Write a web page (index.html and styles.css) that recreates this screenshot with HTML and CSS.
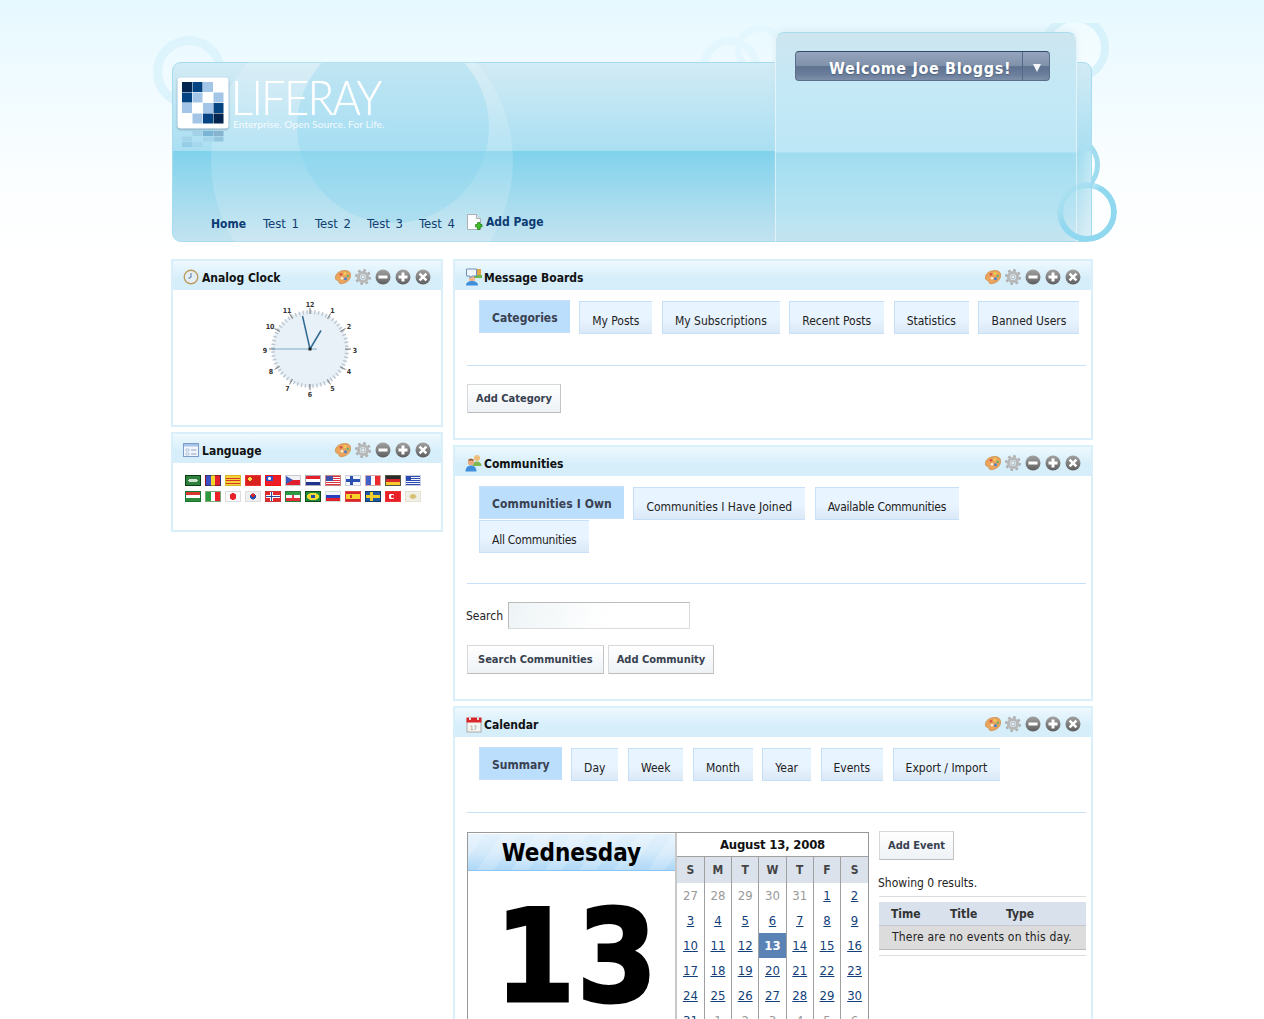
FILE: index.html
```html
<!DOCTYPE html>
<html lang="en">
<head>
<meta charset="utf-8">
<title>Liferay</title>
<link rel="stylesheet" href="styles.css">
</head>
<body>
<svg class="sprites" width="0" height="0" aria-hidden="true">
  <defs>
    <linearGradient id="g-btn" x1="0" y1="0" x2="0" y2="1"><stop offset="0" stop-color="#a2a2a2"/><stop offset="1" stop-color="#5e5e5e"/></linearGradient>
    <symbol id="i-palette" viewBox="0 0 16 16"><path d="M.3 9C.3 4.500 4.500 1.500 10 1.500c3.700 0 5.700 2 5.700 4.700 0 4.800-5 8.500-9.700 8.500-1.500 0-2-1-2.300-2.300C3.400 11 .3 11.500.3 9z" fill="#eba45c" stroke="#c98a48" stroke-width=".7"/><circle cx="6" cy="5.300" r="1.400" fill="#d8554a"/><circle cx="10" cy="4.600" r="1.400" fill="#ecd25a"/><circle cx="12.800" cy="7" r="1.300" fill="#6ab46a"/><circle cx="10.500" cy="9.800" r="1.500" fill="#4a7fd0"/><circle cx="7" cy="9.300" r="1.300" fill="#f6efe0"/></symbol>
    <symbol id="i-gear" viewBox="0 0 16 16"><circle cx="8" cy="8" r="6.800" fill="none" stroke="#aeaeae" stroke-width="2.400" stroke-dasharray="2.670 2.670"/><circle cx="8" cy="8" r="4.600" fill="none" stroke="#b8b8b8" stroke-width="3"/><circle cx="8" cy="8" r="2" fill="#e8eef0" stroke="#929292" stroke-width=".6"/></symbol>
    <symbol id="i-min" viewBox="0 0 16 16"><circle cx="8" cy="8" r="7.500" fill="url(#g-btn)"/><rect x="3.500" y="6.500" width="9" height="3" fill="#fff"/></symbol>
    <symbol id="i-max" viewBox="0 0 16 16"><circle cx="8" cy="8" r="7.500" fill="url(#g-btn)"/><path d="M3.500 6.500h3v-3h3v3h3v3h-3v3h-3v-3h-3z" fill="#fff"/></symbol>
    <symbol id="i-close" viewBox="0 0 16 16"><circle cx="8" cy="8" r="7.500" fill="url(#g-btn)"/><path d="M5.500 3.800 8 6.200l2.500-2.400 1.800 1.800L9.800 8l2.500 2.400-1.800 1.800L8 9.800l-2.500 2.400-1.800-1.800L6.200 8 3.700 5.600z" fill="#fff"/></symbol>
  </defs>
</svg>

<div class="deco" aria-hidden="true">
  <span class="ring ring-a"></span>
  <span class="ring ring-b"></span>
  <span class="ring ring-c"></span>
  <span class="ring ring-d"></span>
  <span class="ring ring-e"></span>
  <span class="ring ring-f"></span>
</div>

<div class="page">
  <header class="masthead">
    <span class="band"></span>
    <span class="disc disc-outer"></span>
    <span class="disc disc-inner"></span>
    <div class="logo">
      <svg class="logo-mark" width="52" height="52" viewBox="0 0 52 52">
        <rect x=".5" y=".5" width="51" height="51" rx="3" fill="#fff"/>
        <rect x="5" y="5" width="10" height="10" fill="#03254f"/><rect x="15.500" y="5" width="10" height="10" fill="#044482"/><rect x="26" y="5" width="10" height="10" fill="#a3c5e8"/>
        <rect x="5" y="15.500" width="10" height="10" fill="#044482"/><rect x="15.500" y="15.500" width="10" height="10" fill="#a3c5e8"/><rect x="36.500" y="15.500" width="10" height="10" fill="#a3c5e8"/>
        <rect x="5" y="26" width="10" height="10" fill="#a3c5e8"/><rect x="26" y="26" width="10" height="10" fill="#a3c5e8"/><rect x="36.500" y="26" width="10" height="10" fill="#044482"/>
        <rect x="15.500" y="36.500" width="10" height="10" fill="#a3c5e8"/><rect x="26" y="36.500" width="10" height="10" fill="#044482"/><rect x="36.500" y="36.500" width="10" height="10" fill="#03254f"/>
      </svg>
      <svg class="logo-echo" width="52" height="22" viewBox="0 0 52 22" aria-hidden="true">
        <rect x="15.500" y="2" width="10" height="5" fill="#8db8d8" opacity=".4"/><rect x="26" y="2" width="10" height="5" fill="#3a7fb0" opacity=".45"/><rect x="36.500" y="2" width="10" height="5" fill="#356a94" opacity=".4"/>
        <rect x="5" y="7.500" width="10" height="5" fill="#8db8d8" opacity=".3"/><rect x="26" y="7.500" width="10" height="5" fill="#8db8d8" opacity=".3"/><rect x="36.500" y="7.500" width="10" height="5" fill="#3a7fb0" opacity=".3"/>
        <rect x="5" y="13" width="10" height="5" fill="#3a7fb0" opacity=".18"/><rect x="15.500" y="13" width="10" height="5" fill="#8db8d8" opacity=".2"/>
      </svg>
      <div class="logo-text">
        <div class="logo-name">LIFERAY</div>
        <div class="logo-tag">Enterprise. Open Source. For Life.</div>
      </div>
    </div>
    <nav class="nav">
      <a class="nav-item nav-current">Home</a>
      <a class="nav-item">Test 1</a>
      <a class="nav-item">Test 2</a>
      <a class="nav-item">Test 3</a>
      <a class="nav-item">Test 4</a>
      <a class="nav-add">
        <svg width="16" height="17" viewBox="0 0 16 17"><path d="M.5.500h9l4 4v11H.5z" fill="#fbfcfd" stroke="#aab2b8"/><path d="M9.500.500v4h4" fill="#dfe5e8" stroke="#aab2b8"/><path d="M9.500 9.500h2v-2h2.500v2h2V12h-2v2.500h-2.500V12h-2z" transform="translate(-1 1)" fill="#43c02c" stroke="#1c7c10" stroke-width=".7"/></svg>
        <span>Add Page</span>
      </a>
    </nav>
    <div class="dock">
      <div class="dock-button">
        <span class="dock-label">Welcome Joe Bloggs!</span>
        <span class="dock-arrow"></span>
      </div>
    </div>
  </header>

  <div class="columns">
    <div class="col col-left">
      <section class="portlet">
        <div class="p-title">
          <svg class="p-icon" width="16" height="16" viewBox="0 0 16 16"><circle cx="8" cy="8" r="6.800" fill="#e6eef5" stroke="#bd9f64" stroke-width="1.400"/><path d="M8 4v4l-2.500 1.500" fill="none" stroke="#5c7fa8" stroke-width="1.100"/></svg>
          <h2 class="p-name">Analog Clock</h2>
          <div class="p-tools"><svg><use href="#i-palette"/></svg><svg><use href="#i-gear"/></svg><svg><use href="#i-min"/></svg><svg><use href="#i-max"/></svg><svg><use href="#i-close"/></svg></div>
        </div>
        <div class="clock-body">
          <svg class="clock" width="110" height="110" viewBox="-55 -55 110 110">
            <circle r="38" fill="#e9f1f8"/>
            <circle r="37" fill="none" stroke="#bcc4cc" stroke-width="4" stroke-dasharray="1.300 2.575"/>
            <g stroke="#777" stroke-width="1">
              <line x1="0" y1="-35" x2="0" y2="-41"/><line x1="0" y1="35" x2="0" y2="41"/><line x1="-35" y1="0" x2="-41" y2="0"/><line x1="35" y1="0" x2="41" y2="0"/>
              <line x1="17.500" y1="-30.300" x2="20.500" y2="-35.500"/><line x1="30.300" y1="-17.500" x2="35.500" y2="-20.500"/><line x1="30.300" y1="17.500" x2="35.500" y2="20.500"/><line x1="17.500" y1="30.300" x2="20.500" y2="35.500"/>
              <line x1="-17.500" y1="30.300" x2="-20.500" y2="35.500"/><line x1="-30.300" y1="17.500" x2="-35.500" y2="20.500"/><line x1="-30.300" y1="-17.500" x2="-35.500" y2="-20.500"/><line x1="-17.500" y1="-30.300" x2="-20.500" y2="-35.500"/>
            </g>
            <g class="clock-num" text-anchor="middle">
              <text x="0" y="-42.500">12</text><text x="22.500" y="-36">1</text><text x="39" y="-20">2</text><text x="45" y="3.500">3</text><text x="39" y="25">4</text><text x="22.500" y="42">5</text><text x="0" y="48">6</text><text x="-22.500" y="42">7</text><text x="-39" y="25">8</text><text x="-45" y="3.500">9</text><text x="-40" y="-20">10</text><text x="-23" y="-36">11</text>
            </g>
            <line x1="7" y1="0" x2="-38" y2="0" stroke="#7ba9c4" stroke-width="1"/>
            <line x1="0" y1="0" x2="-7.500" y2="-33" stroke="#2f6a94" stroke-width="1.500"/>
            <line x1="0" y1="0" x2="11" y2="-18.500" stroke="#2f6a94" stroke-width="1.500"/>
            <rect x="-1.500" y="-1.500" width="3" height="3" fill="#222"/>
          </svg>
        </div>
      </section>

      <section class="portlet">
        <div class="p-title">
          <svg class="p-icon" width="16" height="14" viewBox="0 0 16 14"><rect x=".5" y=".5" width="15" height="13" fill="#f2f6fb" stroke="#7e9cc8"/><rect x="1" y="1" width="14" height="2.500" fill="#a6c4e8"/><path d="M3 6h3v2H3zM3 10h3v2H3z" fill="#fff" stroke="#8ba5c8" stroke-width=".6"/><path d="M8 7h5.500M8 11h5.500" stroke="#8ba5c8"/></svg>
          <h2 class="p-name">Language</h2>
          <div class="p-tools"><svg><use href="#i-palette"/></svg><svg><use href="#i-gear"/></svg><svg><use href="#i-min"/></svg><svg><use href="#i-max"/></svg><svg><use href="#i-close"/></svg></div>
        </div>
        <div class="flags">
          <i class="flag f-sa"></i><i class="flag f-ad"></i><i class="flag f-ca"></i><i class="flag f-cn"></i><i class="flag f-tw"></i><i class="flag f-cz"></i><i class="flag f-nl"></i><i class="flag f-us"></i><i class="flag f-fi"></i><i class="flag f-fr"></i><i class="flag f-de"></i><i class="flag f-gr"></i>
          <i class="flag f-hu"></i><i class="flag f-it"></i><i class="flag f-jp"></i><i class="flag f-kr"></i><i class="flag f-no"></i><i class="flag f-ir"></i><i class="flag f-br"></i><i class="flag f-ru"></i><i class="flag f-es"></i><i class="flag f-se"></i><i class="flag f-tr"></i><i class="flag f-vi"></i>
        </div>
      </section>
    </div>

    <div class="col col-right">
      <section class="portlet">
        <div class="p-title">
          <svg class="p-icon-main" width="18" height="18" viewBox="0 0 18 18"><circle cx="7" cy="11" r="3" fill="#f0b68a"/><path d="M1 17.500c0-3 2.500-4.500 6-4.500s6 1.500 6 4.500z" fill="#3f8fdc"/><rect x="11" y="1" width="5" height="6" fill="#e0a848"/><path d="M9 7h8v3H9z" fill="#74b84a"/><path d="M1.500 1h10v7H7l-2 2V8H1.500z" fill="#f2f7fc" stroke="#6f8fb8"/></svg>
          <h2 class="p-name">Message Boards</h2>
          <div class="p-tools"><svg><use href="#i-palette"/></svg><svg><use href="#i-gear"/></svg><svg><use href="#i-min"/></svg><svg><use href="#i-max"/></svg><svg><use href="#i-close"/></svg></div>
        </div>
        <div class="p-body">
          <ul class="tabs">
            <li class="tab tab-on">Categories</li>
            <li class="tab">My Posts</li>
            <li class="tab">My Subscriptions</li>
            <li class="tab">Recent Posts</li>
            <li class="tab">Statistics</li>
            <li class="tab">Banned Users</li>
          </ul>
          <div class="rule"></div>
          <div class="actions"><button class="btn">Add Category</button></div>
        </div>
      </section>

      <section class="portlet">
        <div class="p-title">
          <svg class="p-icon-main" width="18" height="18" viewBox="0 0 18 18"><circle cx="12" cy="4" r="3" fill="#eebe7a"/><path d="M7.500 12c0-3 2-4.500 4.500-4.500s4.500 1.500 4.500 4.500z" fill="#7cb84e"/><circle cx="6" cy="8" r="3.200" fill="#e8a882"/><path d="M3 6.500c1-2.500 5-2.500 6 0z" fill="#8a5a30"/><path d="M.5 17.500c0-4 2.500-6 5.500-6s5.500 2 5.500 6z" fill="#3f8fdc"/></svg>
          <h2 class="p-name">Communities</h2>
          <div class="p-tools"><svg><use href="#i-palette"/></svg><svg><use href="#i-gear"/></svg><svg><use href="#i-min"/></svg><svg><use href="#i-max"/></svg><svg><use href="#i-close"/></svg></div>
        </div>
        <div class="p-body">
          <ul class="tabs tabs-double">
            <li class="tab tab-on">Communities I Own</li>
            <li class="tab">Communities I Have Joined</li>
            <li class="tab tab-tight">Available Communities</li>
            <li class="tab tab-tight">All Communities</li>
          </ul>
          <div class="rule"></div>
          <div class="search-row">
            <label class="search-label">Search</label>
            <input class="search-input" type="text">
          </div>
          <div class="actions actions-tight"><button class="btn btn-wide">Search Communities</button><button class="btn">Add Community</button></div>
        </div>
      </section>

      <section class="portlet">
        <div class="p-title">
          <svg class="p-icon-main" width="18" height="18" viewBox="0 0 18 18"><rect x="2" y="4" width="14" height="13" fill="#f4f4f0" stroke="#aaa"/><rect x="1.500" y="2.500" width="15" height="5" fill="#d8262c"/><rect x="4" y="1" width="2" height="4" fill="#ddd"/><rect x="12" y="1" width="2" height="4" fill="#ddd"/><text x="5" y="14.500" class="cal-icon-num">17</text></svg>
          <h2 class="p-name">Calendar</h2>
          <div class="p-tools"><svg><use href="#i-palette"/></svg><svg><use href="#i-gear"/></svg><svg><use href="#i-min"/></svg><svg><use href="#i-max"/></svg><svg><use href="#i-close"/></svg></div>
        </div>
        <div class="p-body p-body-open">
          <ul class="tabs">
            <li class="tab tab-on">Summary</li>
            <li class="tab">Day</li>
            <li class="tab">Week</li>
            <li class="tab">Month</li>
            <li class="tab">Year</li>
            <li class="tab">Events</li>
            <li class="tab">Export / Import</li>
          </ul>
          <div class="rule"></div>
          <div class="cal-layout">
            <div class="cal-box">
              <div class="cal-day">
                <div class="cal-weekday">Wednesday</div>
                <div class="cal-bignum">13</div>
              </div>
              <div class="cal-month">
                <div class="cal-month-title">August 13, 2008</div>
                <table class="cal-grid">
                  <thead><tr><th>S</th><th>M</th><th>T</th><th>W</th><th>T</th><th>F</th><th>S</th></tr></thead>
                  <tbody>
                    <tr><td class="off">27</td><td class="off">28</td><td class="off">29</td><td class="off">30</td><td class="off">31</td><td><a>1</a></td><td><a>2</a></td></tr>
                    <tr><td><a>3</a></td><td><a>4</a></td><td><a>5</a></td><td><a>6</a></td><td><a>7</a></td><td><a>8</a></td><td><a>9</a></td></tr>
                    <tr><td><a>10</a></td><td><a>11</a></td><td><a>12</a></td><td class="today">13</td><td><a>14</a></td><td><a>15</a></td><td><a>16</a></td></tr>
                    <tr><td><a>17</a></td><td><a>18</a></td><td><a>19</a></td><td><a>20</a></td><td><a>21</a></td><td><a>22</a></td><td><a>23</a></td></tr>
                    <tr><td><a>24</a></td><td><a>25</a></td><td><a>26</a></td><td><a>27</a></td><td><a>28</a></td><td><a>29</a></td><td><a>30</a></td></tr>
                    <tr><td><a>31</a></td><td class="off">1</td><td class="off">2</td><td class="off">3</td><td class="off">4</td><td class="off">5</td><td class="off">6</td></tr>
                  </tbody>
                </table>
              </div>
            </div>
            <div class="cal-side">
              <button class="btn">Add Event</button>
              <p class="results">Showing 0 results.</p>
              <div class="events">
                <div class="events-head"><span class="ev-time">Time</span><span class="ev-title">Title</span><span>Type</span></div>
                <div class="events-row">There are no events on this day.</div>
              </div>
            </div>
          </div>
        </div>
      </section>
    </div>
  </div>
</div>
</body>
</html>
```

FILE: styles.css
```css
html, body { margin: 0; padding: 0; height: 1019px; overflow: hidden; }
body {
  position: relative;
  background: linear-gradient(#e6f9ff 0, #f1fbff 90px, #fbfeff 180px, #fff 260px);
  font-family: "DejaVu Sans Condensed", "DejaVu Sans", sans-serif;
  font-stretch: condensed;
  font-size: 12px;
  color: #111;
}
.sprites { position: absolute; }

/* backdrop rings */
.deco { position: absolute; left: 0; right: 0; top: 23px; height: 230px; overflow: hidden; }
.ring { position: absolute; display: block; border-radius: 50%; box-sizing: border-box; border-style: solid; }
.ring-a { left: 153px; top: 13px; width: 72px; height: 72px; border-width: 9px; border-color: #def4fd; }
.ring-b { left: 1041px; top: -9px; width: 68px; height: 68px; border-width: 8px; border-color: #d8f2fc; background: rgba(255,255,255,.35); }
.ring-c { left: 700px; top: 14px; width: 60px; height: 60px; border-width: 8px; border-color: #e5f7fe; }
.ring-d { left: 735px; top: 2px; width: 50px; height: 50px; border-width: 7px; border-color: #e5f7fe; }
.ring-e { left: 1040px; top: 112px; width: 60px; height: 60px; border-width: 5px; border-color: #9fdcf0; }
.ring-f {
  left: 1057px; top: 159px; width: 60px; height: 60px;
  border-width: 6px; border-color: #90d8ef;
  z-index: 3;
  -webkit-mask-image: linear-gradient(135deg, transparent 12%, #000 42%);
  mask-image: linear-gradient(135deg, transparent 12%, #000 42%);
}

.page { position: relative; width: 922px; margin: 0 auto; padding-top: 62px; }

/* masthead */
.masthead {
  position: relative;
  box-sizing: border-box;
  height: 180px;
  margin: 0 1px;
  border: 1px solid #a5dcef;
  border-radius: 9px;
  background: linear-gradient(#d3ebf5 0, #a9dff2 88px);
  display: flex;
  flex-direction: column;
  justify-content: space-between;
}
.band, .disc { position: absolute; pointer-events: none; }
.band {
  left: 0; right: 0; top: 88px; bottom: 0;
  border-radius: 0 0 8px 8px;
  background: linear-gradient(90deg, rgba(255,255,255,0) 97%, rgba(255,255,255,.45) 100%), linear-gradient(#80d2ec 0, #c3e3f0 100%);
}
.disc { border-radius: 50%; }
.disc-outer { left: 38px; top: -53px; width: 302px; height: 302px; background: rgba(255,255,255,.16); clip-path: inset(52px 0 63px 0); }
.disc-inner { left: 124px; top: -32px; width: 192px; height: 192px; background: rgba(125,210,236,.28); clip-path: inset(32px 0 0 0); }

.logo { position: relative; display: flex; align-items: flex-start; padding: 14px 0 0 4px; }
.logo-mark { flex: none; filter: drop-shadow(0 1px 1px rgba(60,90,120,.5)); }
.logo-echo { position: absolute; left: 4px; top: 66px; }
.logo-text { margin-left: 4px; }
.logo-name {
  font-family: "Lato", sans-serif;
  font-stretch: normal;
  font-size: 47px;
  font-weight: 300;
  line-height: 41px;
  letter-spacing: -1.600px;
  margin-left: -2px;
  color: #fff;
  text-shadow: 0 0 1px rgba(255,255,255,.8);
  transform: scaleX(.92);
  transform-origin: left center;
}
.logo-tag {
  font-family: "Lato", sans-serif;
  font-stretch: normal;
  font-size: 10.300px;
  line-height: 12px;
  color: rgba(255,255,255,.85);
  white-space: nowrap;
}

.nav { position: relative; display: flex; align-items: center; padding: 0 0 7px 38px; height: 20px; font-size: 13px; word-spacing: 2px; }
.nav-item { width: 52px; margin-top: -2px; color: #123f73; white-space: nowrap; }
.nav-current { margin-top: 0; font-size: 12px; font-weight: 700; color: #0d3b73; }
.nav-add { display: flex; align-items: center; gap: 3px; margin-left: -4px; font-size: 12px; font-weight: 700; color: #0d3b73; word-spacing: 0; }
.nav-add svg { position: relative; top: -2px; }
.nav-add span { position: relative; top: -2px; }

.dock {
  position: absolute;
  left: 602px;
  top: -31px;
  box-sizing: border-box;
  width: 302px;
  height: 210px;
  padding: 18px 26px 0 19px;
  border: 1px solid rgba(255,255,255,.5);
  border-top-color: #a9dcee;
  border-bottom: 0;
  border-radius: 9px 9px 0 0;
  background: linear-gradient(#cde6f0 0, #c4e8f6 55px, #bde7f6 119px, #a0ddf0 120px, #b2e2f2 165px, rgba(196,230,242,.6) 195px, rgba(196,230,242,0) 100%);
  box-shadow: 0 -3px 6px rgba(200,225,235,.35);
  z-index: 2;
}
.dock-button {
  position: relative;
  box-sizing: border-box;
  height: 30px;
  border: 1px solid #5b6f8a;
  border-top-color: #2f4a66;
  border-radius: 4px;
  background: linear-gradient(#96a5bd 0, #7f90aa 50%, #5f7391 52%, #6a7d9a 80%, #7f90aa 100%);
  color: #fff;
  font-size: 16px;
  font-weight: 700;
  line-height: 34px;
  letter-spacing: .65px;
  padding-left: 33px;
  text-shadow: 0 1px 1px rgba(40,60,90,.4);
}
.dock-button::after { content: ""; position: absolute; right: 26px; top: 0; bottom: 0; width: 1px; background: #55688a; }
.dock-arrow { position: absolute; right: 8px; top: 12px; border: 4.500px solid transparent; border-top: 8px solid #f4f6fa; border-bottom: 0; }

/* columns */
.columns { display: flex; gap: 10px; align-items: flex-start; margin-top: 17px; }
.col { display: flex; flex-direction: column; gap: 5px; }
.col-left { width: 272px; flex: none; }
.col-right { width: 640px; flex: none; }

.portlet { box-sizing: border-box; border: 2px solid #d9f0fb; background: #fff; }
.p-title {
  display: flex;
  align-items: center;
  height: 29px;
  box-sizing: border-box;
  padding: 2px 10px 0;
  background: linear-gradient(#eef9fe 0, #d6eefa 60%, #d6eefa 100%);
}
.p-icon { flex: none; margin: 0 3px 0 0; }
.p-icon-main { flex: none; margin: 0 1px 0 0; }
.p-name { margin: 2px 0 0; font-size: 12px; font-weight: 700; color: #111; white-space: nowrap; }
.p-tools { display: flex; gap: 4px; margin-left: auto; }
.p-tools svg { width: 16px; height: 16px; display: block; }

.clock-body { height: 135px; box-sizing: border-box; padding: 4px 0 0 0; display: flex; justify-content: center; }
.clock { margin-left: 5px; }
.clock-num text { font-size: 7px; font-weight: 700; fill: #333; }

.flags { display: grid; grid-template-columns: repeat(12, 16px); column-gap: 4px; row-gap: 5px; padding: 12px 0 28px 12px; }
.flag { display: block; width: 16px; height: 11px; box-sizing: border-box; border: 1px solid rgba(0,0,0,.35); }
.f-sa { background: radial-gradient(ellipse 5px 2px at 50% 50%, #cfe3d0 0 90%, transparent 100%), #2f7f3d; border-color: #0b3d14; }
.f-ad { background: linear-gradient(90deg, #3a4ec8 33%, #f6d22c 33% 66%, #e0202c 66%); }
.f-ca { background: repeating-linear-gradient(#f3d23a 0 1.500px, #d6362a 1.500px 2.500px); border-color: #d8b828; }
.f-cn { background: radial-gradient(circle 2px at 4px 3px, #ffe14a 0 90%, transparent 100%), #d8221e; border-color: #e33; }
.f-tw { background: radial-gradient(circle 1.500px at 3.500px 2.500px, #fff 0 90%, transparent 100%), linear-gradient(#3050c8, #3050c8) 0 0/7px 5px no-repeat, #ee1c25; border-color: #e11; }
.f-cz { background: linear-gradient(#f2f2f6 50%, #e0202c 50%); position: relative; border-color: #c7c9d4; overflow: hidden; }
.f-cz::before { content: ""; display: block; width: 0; border: 4.500px solid transparent; border-left: 7px solid #3a58b8; border-right: 0; }
.f-nl { background: linear-gradient(#e5202a 33%, #fff 33% 66%, #20358f 66%); border-color: #aab; }
.f-us { background: linear-gradient(#3c50a8, #3c50a8) 0 0/7px 5px no-repeat, repeating-linear-gradient(#d9303a 0 1px, #fff 1px 2px); border-color: #c88; }
.f-fi { background: linear-gradient(#2a50b0, #2a50b0) 0 50%/100% 3px no-repeat, linear-gradient(#2a50b0, #2a50b0) 4px 0/3px 100% no-repeat, #f2f5fa; border-color: #c8d0dc; }
.f-fr { background: linear-gradient(90deg, #3f62c8 33%, #fff 33% 66%, #ee2a30 66%); border-color: #d8a8a8; }
.f-de { background: linear-gradient(#2a2a2a 33%, #d8262a 33% 66%, #f6ca2e 66%); border-color: #554; }
.f-gr { background: linear-gradient(#2a4ab0, #2a4ab0) 0 0/5px 5px no-repeat, repeating-linear-gradient(#2a4ab0 0 1px, #f2f4fa 1px 2px); border-color: #c8d0e0; }
.f-hu { background: linear-gradient(#d8382e 33%, #fff 33% 66%, #2f8a3c 66%); border-color: #173; }
.f-it { background: linear-gradient(90deg, #2e9a3e 33%, #fff 33% 66%, #ee2028 66%); border-color: #7a7; }
.f-jp { background: radial-gradient(circle 3.500px at 50% 50%, #e8202a 0 90%, transparent 100%), #fafafa; border-color: #ddd; }
.f-kr { background: radial-gradient(circle 1.800px at 50% 35%, #d8262a 0 90%, transparent 100%), radial-gradient(circle 3.200px at 50% 50%, #2a4aa8 0 90%, transparent 100%), #f0f0f0; border-color: #ddd; }
.f-no { background: linear-gradient(#2a4a9c, #2a4a9c) 0 50%/100% 1px no-repeat, linear-gradient(#2a4a9c, #2a4a9c) 5px 0/1px 100% no-repeat, linear-gradient(#fff, #fff) 0 50%/100% 3px no-repeat, linear-gradient(#fff, #fff) 4px 0/3px 100% no-repeat, #e02a30; border-color: #c33; }
.f-ir { background: radial-gradient(circle 1.500px at 50% 50%, #e0404a 0 90%, transparent 100%), linear-gradient(#2f9a44 33%, #fff 33% 66%, #e0303a 66%); border-color: #2a7a3a; }
.f-br { background: radial-gradient(circle 2px at 50% 50%, #2a4aa8 0 90%, transparent 100%), radial-gradient(ellipse 6.500px 3.800px at 50% 50%, #f0dc30 0 90%, transparent 100%), #1f8a3a; border-color: #0d4a1a; }
.f-ru { background: linear-gradient(#f4f4f8 33%, #2a3fc0 33% 66%, #e0202a 66%); border-color: #cdd; }
.f-es { background: radial-gradient(circle 1.500px at 5px 50%, #c83a2a 0 90%, transparent 100%), linear-gradient(#d8262a 25%, #f6d42a 25% 75%, #d8262a 75%); border-color: #d44; }
.f-se { background: linear-gradient(#f2ce2a, #f2ce2a) 0 50%/100% 3px no-repeat, linear-gradient(#f2ce2a, #f2ce2a) 4px 0/3px 100% no-repeat, #1f5aa0; border-color: #123a6a; }
.f-tr { background: radial-gradient(circle 1.500px at 6.500px 50%, #e8202a 0 90%, transparent 100%), radial-gradient(circle 3px at 5.500px 50%, #fff 0 90%, transparent 100%), #e8202a; border-color: #e33; }
.f-vi { background: radial-gradient(ellipse 4px 3px at 50% 50%, #d6c070 0 60%, transparent 100%), #f0f0e8; border-color: #e3e3d0; }

.p-body { padding: 10px 5px 25px 12px; }
.p-body-open { padding-bottom: 0; }

.tabs { list-style: none; display: flex; flex-wrap: wrap; column-gap: 9.500px; margin: 0 0 32px 12px; padding: 0; }
.tabs-double { margin-bottom: 31px; max-width: 500px; }
.tabs-double .tab-on { letter-spacing: .12px; }
.tab {
  box-sizing: border-box;
  height: 33px;
  margin: 1px 0 -1px;
  padding: 0 13px 0 12px;
  border: 1px solid #c6e0fa;
  border-width: 1px 0 1px 1px;
  background: linear-gradient(#e8f4ff 0, #e8f4ff 55%, #dbe8f6 100%);
  line-height: 38px;
  white-space: nowrap;
  color: #222;
}
.tab-tight { letter-spacing: -.25px; }
.tab-on { margin: 0; background: #bbdefd; font-weight: 700; color: #3a4150; line-height: 34px; padding: 0 12px 0 12px; }

.rule { height: 1px; background: #c6e0fa; }

.btn {
  display: block;
  box-sizing: border-box;
  height: 29px;
  padding: 0 8px;
  border: 1px solid #d8d8d8;
  border-right-color: #c4c4c4;
  border-bottom-color: #bcbcbc;
  background: linear-gradient(#fff 0, #eef2f6 100%);
  font: 700 11px "DejaVu Sans Condensed", "DejaVu Sans", sans-serif;
  font-stretch: condensed;
  color: #37414f;
  white-space: nowrap;
}
.btn-wide { padding: 0 10px; }
.actions { margin-top: 18px; display: flex; gap: 4px; }
.actions-tight { margin-top: 16px; }

.search-row { display: flex; align-items: center; gap: 5px; margin: 18px 0 0 -1px; }
.search-label { color: #222; }
.search-input {
  box-sizing: border-box;
  width: 182px;
  height: 27px;
  margin: 0;
  border: 1px solid #dcdcdc;
  border-top-color: #bbb;
  border-left-color: #bbb;
  background: linear-gradient(100deg, #eef4f6 0, #fff 55%);
}

.cal-icon-num { font-size: 6px; fill: #888; }

.cal-layout { display: flex; gap: 10px; margin-top: 18px; align-items: flex-start; }
.cal-box { display: flex; box-sizing: border-box; width: 402px; height: 230px; margin-top: 1px; border: 1px solid #999; border-bottom: 0; }
.cal-day { width: 209px; flex: none; box-sizing: border-box; padding-top: 1px; border-right: 2px solid #c8c8c8; text-align: center; overflow: hidden; }
.cal-weekday {
  height: 37px;
  box-sizing: border-box;
  border-bottom: 1px solid #8cc4f4;
  background: repeating-linear-gradient(125deg, rgba(255,255,255,.18) 0 14px, rgba(255,255,255,0) 14px 28px), linear-gradient(#e4f2fc 0, #d4eafa 50%, #aed8f8 100%);
  font-size: 24px;
  font-weight: 700;
  line-height: 38px;
  color: #000;
}
.cal-bignum { font-size: 128px; font-weight: 700; line-height: 128px; letter-spacing: 2px; padding: 0 0 0 11px; color: #000; margin-top: 22px; -webkit-text-stroke: 3px #000; }
.cal-month { flex: 1; min-width: 0; }
.cal-month-title { height: 23px; font-size: 13px; font-weight: 700; line-height: 24px; letter-spacing: -.2px; text-align: center; color: #111; }
.cal-grid { width: 100%; table-layout: fixed; border-collapse: collapse; }
.cal-grid th, .cal-grid td { height: 25px; padding: 0; border-left: 1px solid #a0a0a0; text-align: center; box-sizing: border-box; }
.cal-grid th:first-child, .cal-grid td:first-child { border-left: 0; }
.cal-grid th { height: 26px; background: #dbe2ec; font-weight: 700; color: #444; border-top: 1px solid #a0a0a0; }
.cal-grid td { font-size: 13px; }
.cal-grid a { color: #123f7a; text-decoration: underline; }
.off { color: #999; }
.today { background: #5b82b5; color: #fff; font-weight: 700; }

.cal-side { flex: 1; min-width: 0; }
.results { margin: 16px 0 5px -1px; line-height: 15px; color: #222; }
.events { border-top: 1px solid #ddd; border-bottom: 1px solid #ddd; padding: 5px 0; }
.events-head { display: flex; height: 24px; align-items: center; box-sizing: border-box; padding-left: 12px; background: #d9e1ec; border-bottom: 1px solid #c8c8d0; font-weight: 700; color: #333; }
.ev-time { width: 59px; }
.ev-title { width: 56px; }
.events-row { height: 24px; box-sizing: border-box; padding-left: 13px; background: #dcdcdc; border-bottom: 1px solid #bbb; line-height: 23px; letter-spacing: .2px; color: #222; }
```
